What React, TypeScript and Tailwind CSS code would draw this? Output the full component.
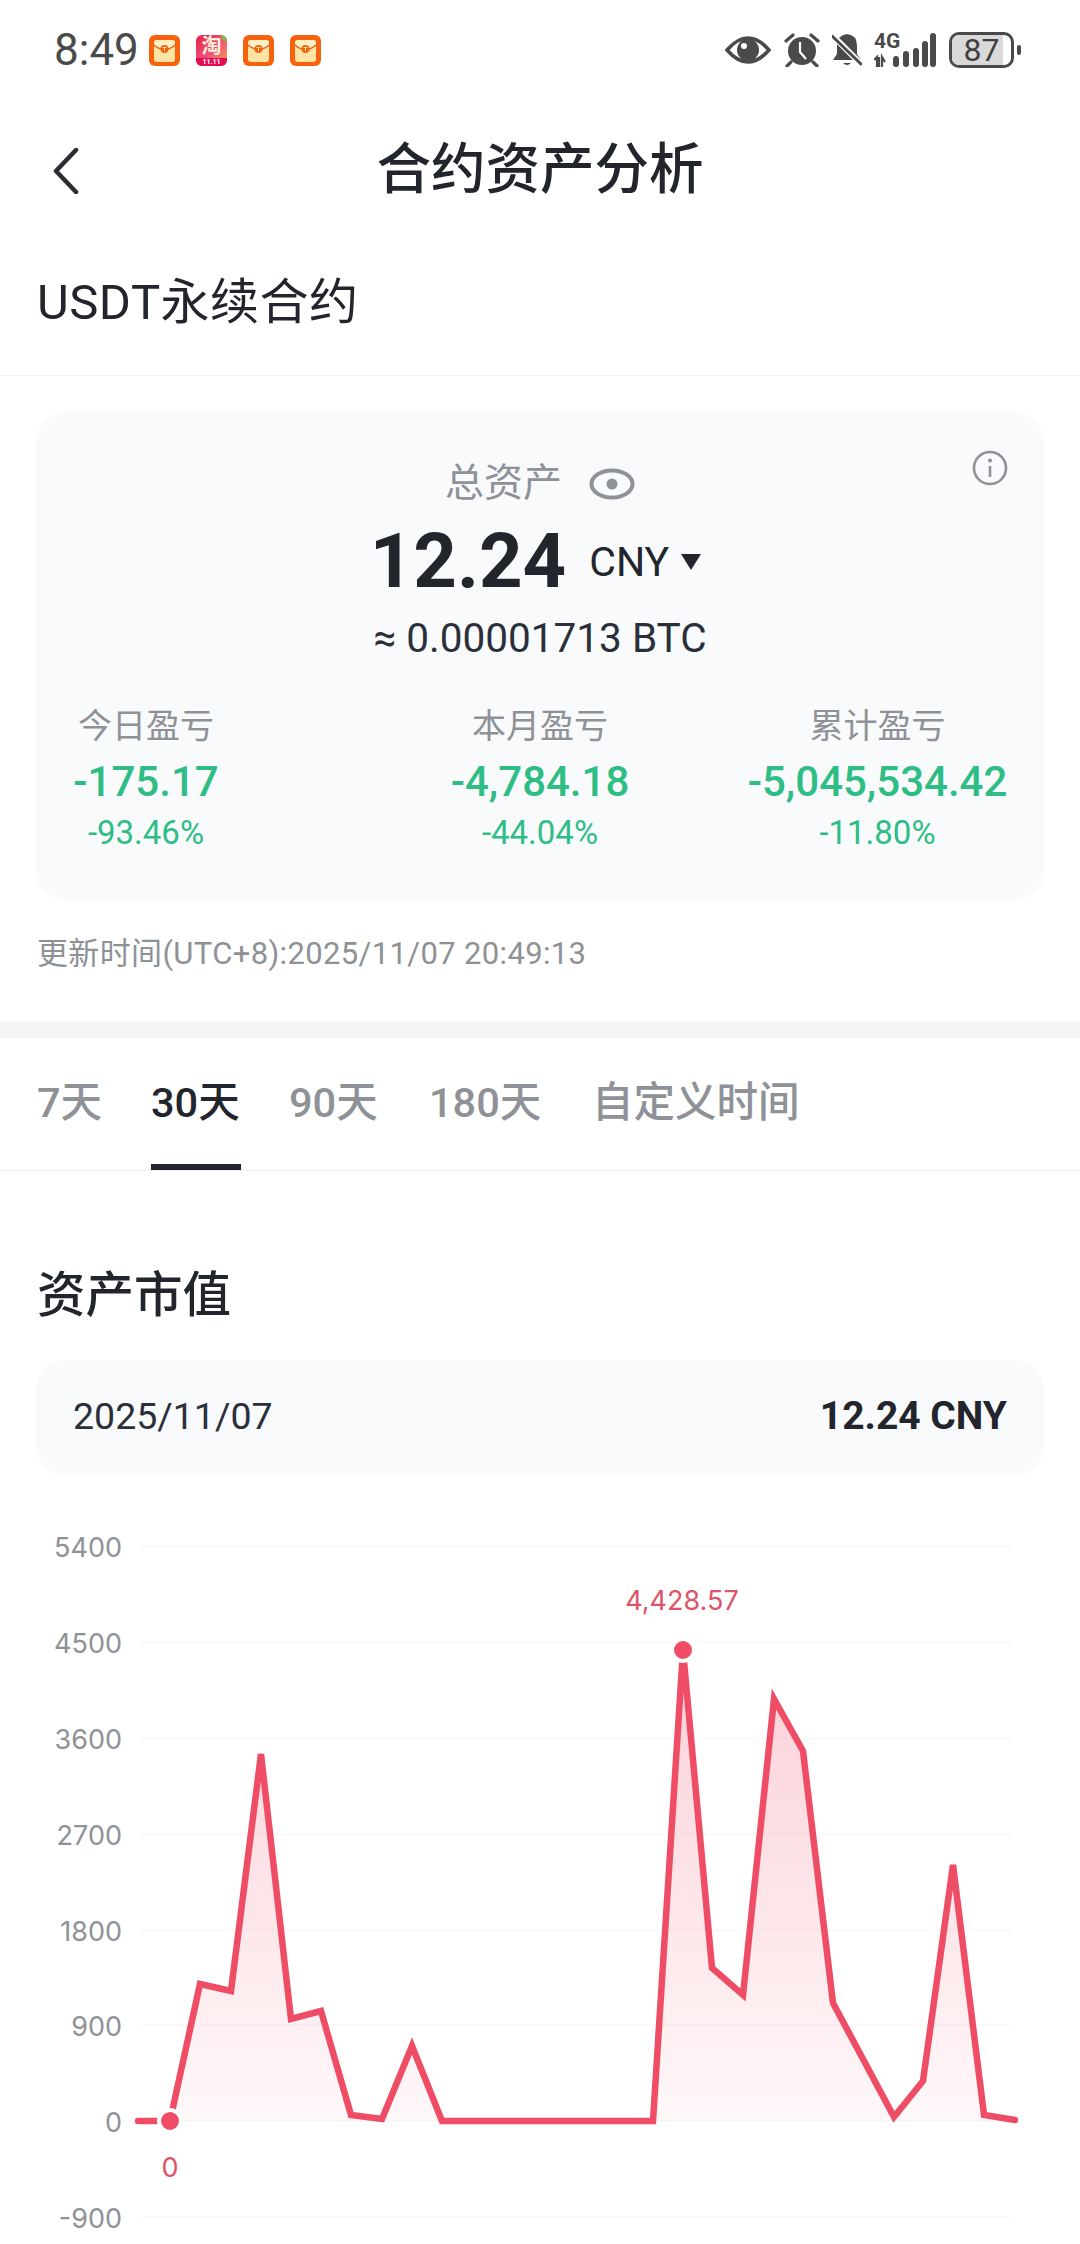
import React from "react";

const TABS = [
  { label: "7天", width: "w-[64px]", gap: "mr-[50px]" },
  { label: "30天", width: "w-[90px]", gap: "mr-[48px]", active: true },
  { label: "90天", width: "w-[90px]", gap: "mr-[50px]" },
  { label: "180天", width: "w-[113px]", gap: "mr-[50px]" },
  { label: "自定义时间", width: "w-[210px]", gap: "" },
];

const Y_AXIS = [
  { label: "5400", y: 1546 },
  { label: "4500", y: 1642 },
  { label: "3600", y: 1738 },
  { label: "2700", y: 1834 },
  { label: "1800", y: 1930 },
  { label: "900", y: 2025 },
  { label: "0", y: 2121 },
  { label: "-900", y: 2217 },
];

const POINTS: [number, number][] = [
  [138, 2121], [170, 2121], [200, 1984], [231, 1991], [261, 1754], [291, 2019], [321, 2011],
  [351, 2115], [382, 2119], [412, 2046], [442, 2121], [472, 2121], [502, 2121], [532, 2121],
  [562, 2121], [592, 2121], [622, 2121], [653, 2121], [683, 1650], [712, 1968], [743, 1995],
  [774, 1699], [803, 1751], [833, 2003], [894, 2117], [923, 2081], [953, 1865],
  [984, 2115], [1015, 2120],
];

const linePath = POINTS.map(([x, y]) => `${x},${y}`).join(" ");
const areaPath = `170,2121 ${POINTS.slice(2).map(([x, y]) => `${x},${y}`).join(" ")} 1015,2121`;

const RedPacket = () => (
  <svg width="31" height="31" viewBox="0 0 31 31">
    <rect width="31" height="31" rx="6" fill="#f8620c" />
    <rect x="5" y="5" width="21" height="22" rx="3" fill="#fde3a4" />
    <path d="M5 10 Q15.5 19 26 10 V8 Q26 5 23 5 H8 Q5 5 5 8 Z" fill="#fff0c4" />
    <path d="M5 10 Q15.5 19 26 10" fill="none" stroke="#e8590c" strokeWidth="1.2" />
    <circle cx="15.5" cy="14" r="4" fill="#f0640f" />
    <path d="M13.5 12.5 H17.5 M15.5 12.5 V16" stroke="#fde3a4" strokeWidth="1" />
  </svg>
);

const TaobaoIcon = () => (
  <div className="w-[31px] h-[31px] rounded-[6px] overflow-hidden relative bg-gradient-to-br from-[#e8173f] via-[#ee4d7e] to-[#f7a13c]">
    <span className="absolute left-0 right-0 top-0 text-center text-[20px] leading-[23px] font-bold text-[#fff0d8]">淘</span>
    <span className="absolute right-0 top-0 w-[6px] h-[6px] rounded-bl-[5px] bg-[#7cc23f]" />
    <span className="absolute left-0 right-0 bottom-0 h-[8px] bg-[#e30d55] text-center text-[7px] leading-[8px] font-bold text-white">11.11</span>
  </div>
);

const StatusIcons = () => (
  <div className="flex items-center">
    <svg width="46" height="32" viewBox="0 0 46 32" className="mr-[13px]">
      <path d="M2 16 Q23 -8 44 16 Q23 40 2 16 Z" fill="none" stroke="#4a4a4a" strokeWidth="3.6" />
      <circle cx="23" cy="16" r="11" fill="#4a4a4a" />
      <circle cx="19" cy="12" r="3" fill="#fff" />
    </svg>
    <svg width="36" height="34" viewBox="0 0 36 34" className="mr-[12px]">
      <circle cx="18" cy="18" r="14" fill="#4a4a4a" />
      <path d="M16 9 V19 L22 26" fill="none" stroke="#fff" strokeWidth="2.2" />
      <path d="M2 8 L9 2 M34 8 L27 2 M7 29 L3 33 M29 29 L33 33" stroke="#4a4a4a" strokeWidth="3.2" strokeLinecap="round" />
    </svg>
    <svg width="30" height="34" viewBox="0 0 30 34" className="mr-[12px]">
      <path d="M15 1 Q25 2 25 13 V21 L29 27 H1 L5 21 V13 Q5 2 15 1 Z" fill="#4a4a4a" />
      <path d="M11 30 Q15 34 19 30 Z" fill="#4a4a4a" />
      <path d="M0 2 L29 31" stroke="#fff" strokeWidth="6" />
      <path d="M0 3 L29 31" stroke="#4a4a4a" strokeWidth="3" strokeLinecap="round" />
    </svg>
    <div className="relative w-[62px] h-[34px] mr-[13px]">
      <span className="absolute left-0 top-[-3px] text-[21px] leading-[22px] font-bold text-[#4a4a4a]">4G</span>
      <svg width="62" height="34" viewBox="0 0 62 34" className="absolute left-0 top-0">
        <path d="M3 34 V24 L0 27 M5 24 V34 M8 34 V24 L11 29" fill="none" stroke="#4a4a4a" strokeWidth="2.2" />
        <rect x="19" y="23" width="6" height="11" rx="3" fill="#4a4a4a" />
        <rect x="29" y="18" width="6" height="16" rx="3" fill="#4a4a4a" />
        <rect x="39" y="15" width="6" height="19" rx="3" fill="#4a4a4a" />
        <rect x="48" y="8" width="6" height="26" rx="3" fill="#4a4a4a" />
        <rect x="56" y="0" width="6" height="34" rx="3" fill="#4a4a4a" />
      </svg>
    </div>
    <div className="relative w-[65px] h-[36px] rounded-[10px] border-[3px] border-[#4a4a4a] overflow-hidden flex items-center justify-center">
      <span className="absolute left-0 top-0 bottom-0 w-[87%] bg-[#d9d9d9]" />
      <span className="relative text-[32px] leading-[30px] text-[#3f3f3f]">87</span>
    </div>
    <span className="ml-[3px] w-[4px] h-[10px] rounded-[2px] bg-[#4a4a4a]" />
  </div>
);

const Stat = ({ label, value, pct, className }: { label: string; value: string; pct: string; className: string }) => (
  <div className={`flex flex-col items-center ${className}`}>
    <div className="h-[44px] leading-[44px] text-[34px] text-[#8e9196]">{label}</div>
    <div className="mt-[9px] h-[50px] leading-[50px] text-[42px] font-medium text-[#2ebd85] whitespace-nowrap">{value}</div>
    <div className="mt-[6px] h-[40px] leading-[40px] text-[33px] text-[#2ebd85]">{pct}</div>
  </div>
);

export default function App() {
  return (
    <div className="w-[1080px] h-[2244px] overflow-hidden bg-white text-[#22252c] font-[Roboto,'Noto_Sans_CJK_SC',sans-serif]">
      {/* status bar */}
      <div className="h-[100px] pl-[54px] pr-[59px] flex items-center justify-between">
        <div className="flex items-center">
          <span className="w-[95px] text-[44px] leading-[50px] text-[#4a4a4a]">8:49</span>
          <div className="flex gap-[16px]">
            <RedPacket />
            <TaobaoIcon />
            <RedPacket />
            <RedPacket />
          </div>
        </div>
        <StatusIcons />
      </div>

      {/* nav */}
      <div className="relative h-[134px] pt-[3px] flex items-center justify-center">
        <svg width="26" height="46" viewBox="0 0 26 46" className="absolute left-[53px] top-[48px]">
          <path d="M23 2 L3 23 L23 44" fill="none" stroke="#2a2d33" strokeWidth="4.5" strokeLinecap="round" strokeLinejoin="round" />
        </svg>
        <h1 className="text-[54.5px] leading-[66px] font-medium">合约资产分析</h1>
      </div>

      <div className="h-[142px] px-[37px] pt-[36px] border-b border-[#eeeff1]">
        <div className="text-[49px] leading-[66px] tracking-[0.5px]">USDT永续合约</div>
      </div>

      {/* asset card */}
      <div className="px-[36px] pt-[36px]">
        <div className="relative h-[488px] rounded-[28px] bg-[#f8fafc] pt-[48px]">
          <svg width="36" height="36" viewBox="0 0 36 36" className="absolute right-[36px] top-[38px]">
            <circle cx="18" cy="18" r="16" fill="none" stroke="#8e9196" strokeWidth="2.6" />
            <circle cx="18" cy="10.5" r="2" fill="#8e9196" />
            <path d="M18 16 V27" stroke="#8e9196" strokeWidth="2.6" />
          </svg>
          <div className="h-[46px] flex items-center justify-center text-[39px] leading-[46px] text-[#8e9196]">
            <span>总资产</span>
            <svg width="46" height="32" viewBox="0 0 46 32" className="ml-[27px] mt-[2px]">
              <ellipse cx="23" cy="16" rx="20.5" ry="13.5" fill="none" stroke="#8e9196" strokeWidth="4" />
              <circle cx="23" cy="16" r="5.5" fill="#8e9196" />
            </svg>
          </div>
          <div className="mt-[18px] h-[74px] flex items-center justify-center pr-[9px]">
            <span className="text-[76px] leading-[74px] font-bold">12.24</span>
            <span className="ml-[23px] mt-[1px] text-[41px] leading-[50px] text-[#22252c]">CNY</span>
            <svg width="20" height="16" viewBox="0 0 20 16" className="ml-[12px] mt-[1px]">
              <path d="M0 0 H20 L10 16 Z" fill="#22252c" />
            </svg>
          </div>
          <div className="mt-[15px] h-[50px] leading-[50px] text-center text-[40.5px] text-[#2b2f3a]">≈ 0.00001713 BTC</div>
          <div className="mt-[41px] pl-[38px] flex">
            <Stat label="今日盈亏" value="-175.17" pct="-93.46%" className="w-[144px]" />
            <Stat label="本月盈亏" value="-4,784.18" pct="-44.04%" className="w-[400px] ml-[122px]" />
            <Stat label="累计盈亏" value="-5,045,534.42" pct="-11.80%" className="w-[259px] ml-[8px]" />
          </div>
        </div>
      </div>

      <div className="h-[121px] px-[37px] pt-[33px] text-[31px] tracking-[0.35px] leading-[42px] text-[#8e9196]">更新时间(UTC+8):2025/11/07 20:49:13</div>

      <div className="h-[17px] bg-[#f4f5f6]" />

      {/* tabs */}
      <div className="h-[133px] pl-[37px] flex border-b border-[#eeeff1]">
        {TABS.map((tab) => (
          <div
            key={tab.label}
            className={`${tab.width} ${tab.gap} h-[132px] pt-[40px] text-[41.5px] leading-[50px] font-medium whitespace-nowrap ${
              tab.active ? "text-[#22252c] border-b-[6px] border-[#22252c]" : "text-[#8e9196]"
            }`}
          >
            {tab.label}
          </div>
        ))}
      </div>

      <div className="h-[189px] px-[37px] pt-[92px]">
        <h2 className="text-[48.5px] leading-[66px] font-medium">资产市值</h2>
      </div>

      <div className="mx-[36px] h-[115px] rounded-[28px] bg-[#f8fafc] px-[37px] pb-[2px] flex items-center justify-between">
        <span className="text-[37.5px] text-[#2b2f3a]">2025/11/07</span>
        <span className="text-[39px] font-bold">12.24 CNY</span>
      </div>

      {/* chart */}
      <svg width="1080" height="744" viewBox="0 1500 1080 744" className="block mt-[25px]">
        <defs>
          <linearGradient id="area" gradientUnits="userSpaceOnUse" x1="0" y1="1650" x2="0" y2="2125">
            <stop offset="0" stopColor="#ee4d65" stopOpacity="0.26" />
            <stop offset="1" stopColor="#ee4d65" stopOpacity="0.04" />
          </linearGradient>
        </defs>
        {Y_AXIS.map((tick) => (
          <g key={tick.label}>
            <line x1="140" x2="1012" y1={tick.y} y2={tick.y} stroke="#f3f4f5" strokeWidth="1" />
            <text x="122" y={tick.y + 11} textAnchor="end" fontSize="27" fontFamily="Inter, sans-serif" fill="#8e9196">
              {tick.label}
            </text>
          </g>
        ))}
        <polygon points={areaPath} fill="url(#area)" />
        <polyline points={linePath} fill="none" stroke="#ee4d65" strokeWidth="6.5" strokeLinecap="round" />
        <circle cx="170" cy="2121" r="11" fill="#ee4d65" stroke="#fff" strokeWidth="4" />
        <circle cx="683" cy="1650" r="11" fill="#ee4d65" stroke="#fff" strokeWidth="4" />
        <text x="170" y="2177" textAnchor="middle" fontSize="27" fontFamily="Inter, sans-serif" fill="#dc5468">0</text>
        <text x="682" y="1610" textAnchor="middle" fontSize="27" fontFamily="Inter, sans-serif" fill="#dc5468">4,428.57</text>
      </svg>
    </div>
  );
}
